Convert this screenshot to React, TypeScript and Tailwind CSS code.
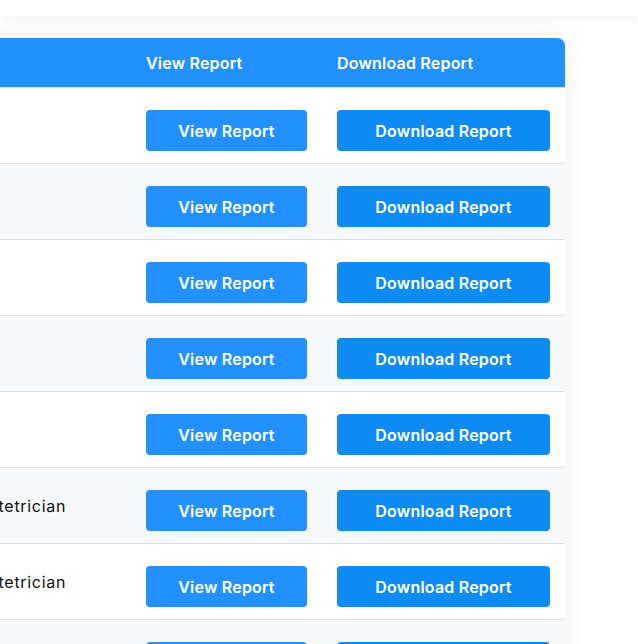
import React from "react";

const rows = ["", "", "", "", "", "Obstetrician", "Obstetrician", ""];

export default function App() {
  return (
    <div
      className="relative w-[638px] h-[644px] overflow-hidden bg-white text-[16px] tracking-[0.2px]"
      style={{ fontFamily: "Inter, 'Noto Sans', sans-serif" }}
    >
      <div className="relative z-10 h-4 bg-white shadow-[0_2px_12px_rgba(0,0,0,0.06)]" />
      <div className="-ml-[43px] mt-[22px] w-[608px] rounded-tr-lg bg-white shadow-[0_0_24px_rgba(0,0,0,0.07)]">
        <div className="flex h-[49px] items-center rounded-tr-lg bg-[#2291ff] font-semibold text-white">
          <div className="w-[174px]" />
          <div className="w-[191px] px-[15px]">View Report</div>
          <div className="w-[243px] px-[15px]">Download Report</div>
        </div>
        {rows.map((r, i) => (
          <div
            key={i}
            className={`flex h-[76px] border-t border-[#dee2e6] first:border-t-0 ${i % 2 === 1 ? "bg-[#f7f8fa]" : "bg-white"}`}
          >
            <div className="flex w-[174px] items-center px-[15px] text-[16px] tracking-[0.7px] text-[#111]">
              <span className="-ml-[6px]">{r}</span>
            </div>
            <div className="w-[191px] px-[15px] pt-[22px]">
              <button className="h-[41px] w-[161px] rounded bg-[#2291ff] font-semibold text-white">
                View Report
              </button>
            </div>
            <div className="w-[243px] px-[15px] pt-[22px]">
              <button className="h-[41px] w-[213px] rounded bg-[#0f8cf3] font-semibold text-white">
                Download Report
              </button>
            </div>
          </div>
        ))}
      </div>
    </div>
  );
}
